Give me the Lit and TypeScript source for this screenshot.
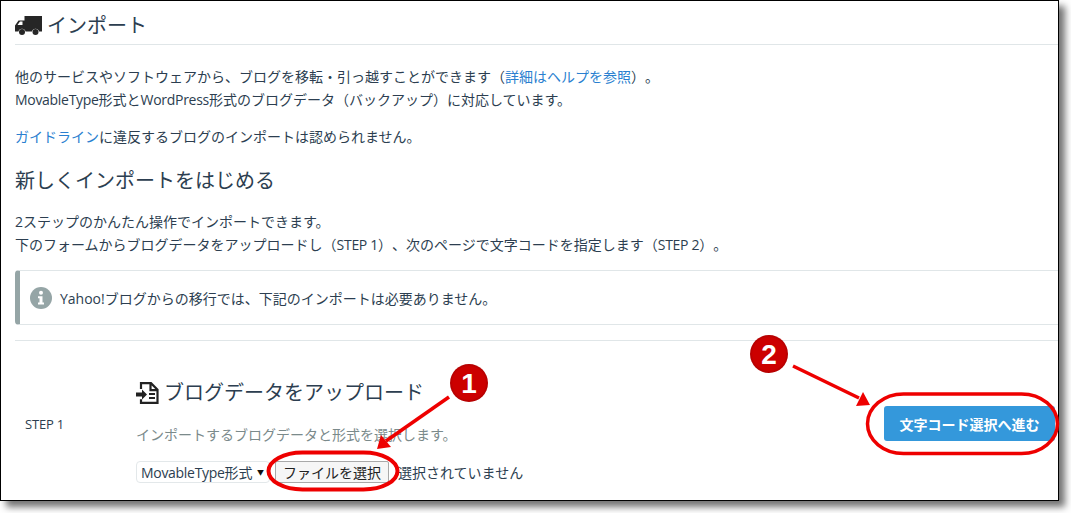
import { LitElement, html, css } from "lit";
import { customElement } from "lit/decorators.js";

@customElement("app-root")
export class AppRoot extends LitElement {
  static styles = css`
    :host { display: block; width: 1071px; height: 513px; background: #fff; overflow: hidden; position: relative;
      font-family: "Open Sans", "Noto Sans CJK JP", sans-serif; font-size: 14px; color: #2c3e50; text-spacing-trim: space-all; }
    .frame { width: 1059px; height: 501px; box-sizing: border-box; border: 1.5px solid #000; background: #fff; overflow: hidden;
      box-shadow: 6px 6px 7px rgba(0,0,0,.55); padding: 0 0 0 14px; }
    h2, h3, p { margin: 0; font-weight: 400; }
    .l { letter-spacing: -0.3px; }
    .title { display: flex; align-items: center; gap: 5px; height: 36px; padding-top: 7px; border-bottom: 1px solid #e0e6e8; font-size: 20px; line-height: 28px; }
    .title svg { width: 27px; height: 20px; flex: none; }
    .lead { margin-top: 20px; line-height: 23px; }
    .guide { margin-top: 14px; line-height: 23px; }
    a { color: #2a7fd0; text-decoration: none; }
    .sub { margin-top: 18px; font-size: 20px; line-height: 30px; }
    .steps { margin-top: 14px; line-height: 23px; }
    .note { margin-top: 14px; height: 55px; box-sizing: border-box; border: 1px solid #e0e6e8; border-left: 5px solid #95a5a6; border-right: 0; border-radius: 4px 0 0 4px;
      display: flex; align-items: center; gap: 8px; padding-left: 10px; }
    .note svg { width: 22px; height: 22px; flex: none; }
    .rule { margin-top: 15px; border-top: 1px solid #e0e6e8; }
    .row { display: grid; grid-template-columns: 121px 1fr auto; align-items: start; }
    .label { padding: 73px 0 0 10px; font-size: 13px; line-height: 20px; letter-spacing: -0.2px; }
    .form { padding-top: 37px; }
    .upload { display: flex; align-items: center; gap: 5px; font-size: 20px; line-height: 30px; }
    .upload svg { width: 23px; height: 22px; flex: none; }
    .hint { margin-top: 16px; color: #7b8a8b; line-height: 22px; }
    .controls { display: flex; align-items: center; margin-top: 15px; height: 22px; }
    .select { width: 134px; height: 22px; box-sizing: border-box; border: 1px solid #e3e8ea; border-radius: 4px; padding: 0 5px 0 4px;
      display: flex; align-items: center; justify-content: space-between; }
    .caret { font-size: 7px; color: #111; }
    .file { margin-left: 5px; width: 114px; height: 22px; box-sizing: border-box; border: 1px solid #a9a9a9; border-radius: 2px; background: #f6f6f6;
      display: flex; align-items: center; justify-content: center; color: #222; }
    .none { margin-left: 9px; }
    .go { width: 171px; height: 35px; margin: 65px 3px 0 0; display: flex; align-items: center; justify-content: center; border-radius: 3px; background: #3498db; color: #fff; font-weight: 700; font-size: 14px; }
    .marks { position: absolute; left: 0; top: 0; width: 1071px; height: 513px; pointer-events: none; }
    .badge { font-family: "Liberation Sans", sans-serif; font-size: 28px; font-weight: 700; fill: #fff; text-anchor: middle; }
  `;

  render() {
    return html`
      <div class="frame">
        <h2 class="title">
          <svg viewBox="0 0 27 20"><path fill="#262626" fill-rule="evenodd" d="M9.500 0h17.500v15.500h-3a3.600 3.600 0 0 0-7 0H10.500a3.600 3.600 0 0 0-7 0H0V9.500l3.500-5H9.500zM2.500 9h5V5.500H5z"/><circle cx="7" cy="16" r="3" fill="#262626"/><circle cx="20.500" cy="16" r="3" fill="#262626"/></svg>
          インポート
        </h2>
        <p class="lead">他のサービスやソフトウェアから、ブログを移転・引っ越すことができます（<a>詳細はヘルプを参照</a>）。<br><span class="l">MovableType</span>形式と<span class="l">WordPress</span>形式のブログデータ（バックアップ）に対応しています。</p>
        <p class="guide"><a>ガイドライン</a>に違反するブログのインポートは認められません。</p>
        <h3 class="sub">新しくインポートをはじめる</h3>
        <p class="steps">2ステップのかんたん操作でインポートできます。<br>下のフォームからブログデータをアップロードし（<span class="l">STEP 1</span>）、次のページで文字コードを指定します（<span class="l">STEP 2</span>）。</p>
        <div class="note">
          <svg viewBox="0 0 22 22"><circle cx="11" cy="11" r="11" fill="#95a5a6"/><circle cx="11" cy="5.800" r="2" fill="#fff"/><path fill="#fff" d="M8 9.200h4.500v6.300H14v2H8v-2h1.500v-4.300H8z"/></svg>
          <span>Yahoo!ブログからの移行では、下記のインポートは必要ありません。</span>
        </div>
        <div class="rule"></div>
        <div class="row">
          <div class="label">STEP 1</div>
          <div class="form">
            <h3 class="upload">
              <svg viewBox="0 0 23 22"><path fill="none" stroke="#222" stroke-width="2.200" d="M5 7V1.200h10l6.500 6.500V20.800H5v-3.500M14.500 1.200v7h7"/><path fill="#222" d="M0 10.500h6V7.500l5 5-5 5v-3H0zM13 11h6v2h-6zM13 15h6v2h-6z"/></svg>
              ブログデータをアップロード
            </h3>
            <p class="hint">インポートするブログデータと形式を選択します。</p>
            <div class="controls">
              <div class="select"><span><span class="l">MovableType</span>形式</span><span class="caret">▼</span></div>
              <div class="file">ファイルを選択</div>
              <span class="none">選択されていません</span>
            </div>
          </div>
          <div class="go">文字コード選択へ進む</div>
        </div>
      </div>
      <svg class="marks" viewBox="0 0 1071 513">
        <defs>
          <radialGradient id="ball" cx="50%" cy="50%" r="50%"><stop offset="85%" stop-color="#cc0000"/><stop offset="100%" stop-color="#b00000"/></radialGradient>
        </defs>
        <rect x="268.500" y="452.500" width="129" height="37" rx="34" ry="18.500" fill="none" stroke="#ee0000" stroke-width="4"/>
        <rect x="867.500" y="394" width="190" height="59.500" rx="36" ry="29.750" fill="none" stroke="#ee0000" stroke-width="3.500"/>
        <path d="M449 397 L386 441" stroke="#ee0000" stroke-width="3.500" fill="none"/>
        <path d="M377 449 L381 435 L391 447 Z" fill="#ee0000"/>
        <path d="M793 366 L859 398" stroke="#ee0000" stroke-width="3.500" fill="none"/>
        <path d="M870 405 L856 406 L863 392 Z" fill="#ee0000"/>
        <circle cx="469" cy="383" r="19" fill="url(#ball)"/>
        <circle cx="769" cy="354" r="19" fill="url(#ball)"/>
        <text class="badge" x="469" y="393">1</text>
        <text class="badge" x="769" y="364">2</text>
      </svg>
    `;
  }
}
